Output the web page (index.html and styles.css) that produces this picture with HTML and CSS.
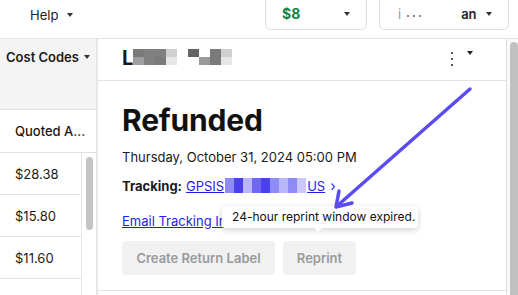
FILE: index.html
```html
<!DOCTYPE html>
<html>
<head>
<meta charset="utf-8">
<link rel="stylesheet" href="styles.css">
</head>
<body>
<div class="page">
  <header class="topbar">
    <div class="help">Help <span class="caret"></span></div>
    <div class="spacer"></div>
    <div class="pill pill-bal">
      <span class="bal">$8</span>
      <span class="caret"></span>
    </div>
    <div class="pill pill-user">
      <span class="uname"><span class="faint">i</span><span class="dots"><i></i><i></i><i></i></span><span class="an">an</span></span>
      <span class="caret"></span>
    </div>
  </header>

  <div class="main">
    <aside class="sidebar">
      <div class="sb-head"><span class="sb-title">Cost Codes</span> <span class="caret"></span></div>
      <div class="col-head">Quoted A...</div>
      <div class="sb-body">
        <div class="rows">
          <div class="row">$28.38</div>
          <div class="row">$15.80</div>
          <div class="row">$11.60</div>
          <div class="row"></div>
        </div>
        <div class="track"><div class="thumb"></div></div>
      </div>
    </aside>

    <section class="detail">
      <div class="d-head">
        <div class="name">L<span class="px">
          <span class="pxcol"><b class="g1"></b><b class="g0"></b></span>
          <span class="pxcol"><b class="g2"></b><b class="g2"></b></span>
          <span class="pxcol"><b class="g2"></b><b class="g1"></b></span>
          <span class="pxcol"><b class="g4"></b><b class="g5"></b></span>
          <span class="pxgap"></span>
          <span class="pxcol"><b class="g6"></b><b class="g3"></b></span>
          <span class="pxcol"><b class="g3"></b><b class="g7"></b></span>
          <span class="pxcol"><b class="g1"></b><b class="g1"></b></span>
          <span class="pxcol"><b class="g4"></b><b class="g5"></b></span>
        </span></div>
        <div class="d-actions">
          <span class="kebab"><i></i><i></i><i></i></span>
          <span class="caret"></span>
        </div>
      </div>
      <div class="d-body">
        <h1 class="status">Refunded</h1>
        <div class="date">Thursday, October 31, 2024 05:00 PM</div>
        <div class="tracking"><span class="lbl">Tracking:</span> <a class="link" href="#">GPSIS<span class="bpx"><i class="b1"></i><i class="b2"></i><i class="b3"></i><i class="b4"></i><i class="b2"></i><i class="b1"></i><i class="b3"></i><i class="b1"></i><i class="b5"></i></span>US</a> <span class="chev">›</span></div>
        <div class="email"><a class="link" href="#">Email Tracking Info</a>
          <div class="tooltip">24-hour reprint window expired.</div>
        </div>
        <div class="buttons">
          <button class="btn btn-return">Create Return Label</button>
          <button class="btn btn-reprint">Reprint</button>
        </div>
      </div>
    </section>

    <div class="pagescroll"><div class="pthumb"></div></div>
  </div>

  <svg class="arrow" width="518" height="295" viewBox="0 0 518 295">
    <g stroke="#5b4cf2" stroke-width="3.5" stroke-linecap="round" stroke-linejoin="round" fill="none">
      <line x1="470" y1="89" x2="337" y2="206"/>
      <polyline points="339,191 336,207 352,203"/>
    </g>
  </svg>
</div>
</body>
</html>
```

FILE: styles.css
```css
* { box-sizing: border-box; }
html, body { margin: 0; padding: 0; }
body {
  width: 518px;
  height: 295px;
  overflow: hidden;
  background: #fff;
  font-family: "Inter", "Liberation Sans", sans-serif;
  color: #1a1a1a;
}
.page { position: relative; width: 518px; height: 295px; overflow: hidden; }

.caret {
  display: inline-block;
  width: 0; height: 0;
  border-left: 3.5px solid transparent;
  border-right: 3.5px solid transparent;
  border-top: 4px solid #333;
  vertical-align: middle;
}

/* top bar */
.topbar {
  height: 39px;
  display: flex;
  align-items: flex-end;
  padding: 0 9px 8px 30px;
  border-bottom: 1px solid #e4e4e4;
  flex-shrink: 0;
}
.help {
  font-size: 13px;
  color: #222;
  align-self: flex-start;
  margin-top: 7px;
  display: flex;
  align-items: center;
  gap: 9px;
}
.spacer { flex: 1; }
.pill {
  height: 40px;
  border: 1px solid #dedede;
  border-radius: 6px;
  display: flex;
  align-items: flex-end;
  justify-content: space-between;
  padding: 0 16px 7px 16px;
}
.pill-bal { width: 102px; margin-right: 12px; }
.pill-user { width: 130px; padding-left: 18px; }
.bal { color: #12834a; font-weight: 700; font-size: 14px; line-height: 16px; }
.pill .caret { margin-bottom: 6px; }
.uname { display: flex; align-items: center; font-size: 13px; font-weight: 600; line-height: 16px; }
.faint { color: #999; font-weight: 400; }
.dots { display: flex; gap: 4px; margin: 4px 40px 0 6px; }
.dots i { width: 2px; height: 2px; background: #888; display: block; }
.an { color: #222; }

/* main */
.main { display: flex; height: 256px; overflow: hidden; }

.sidebar {
  width: 98px;
  flex-shrink: 0;
  border-right: 2px solid #e6e6e6;
  display: flex;
  flex-direction: column;
  overflow: hidden;
}
.sb-head {
  height: 71px;
  flex-shrink: 0;
  background: #f4f4f4;
  border-bottom: 1px solid #e2e2e2;
  padding: 10px 0 0 6px;
  font-size: 13px;
  font-weight: 600;
  display: flex;
  align-items: flex-start;
  gap: 5px;
}
.sb-head .caret { margin-top: 6px; }
.col-head {
  height: 43px;
  flex-shrink: 0;
  border-bottom: 1px solid #e2e2e2;
  padding-left: 15px;
  display: flex;
  align-items: center;
  font-size: 13px;
  font-weight: 500;
}
.sb-body { display: flex; flex-shrink: 0; }
.rows { width: 82px; border-right: 1px solid #e6e6e6; }
.row {
  height: 42px;
  border-bottom: 1px solid #e2e2e2;
  padding-left: 15px;
  display: flex;
  align-items: center;
  font-size: 13px;
}
.track { flex: 1; padding: 4px 0 0 4px; }
.thumb { width: 7px; height: 73px; background: #c4c4c4; border-radius: 4px; }

.detail {
  flex: 1;
  border-right: 1px solid #dcdcdc;
  display: flex;
  flex-direction: column;
}
.d-head {
  height: 42px;
  flex-shrink: 0;
  border-bottom: 1px solid #e3e3e3;
  display: flex;
  align-items: center;
  justify-content: space-between;
  padding: 0 33px 4px 24px;
}
.name {
  font-size: 20px;
  font-weight: 700;
  line-height: 20px;
  display: flex;
  align-items: flex-start;
}
.px { display: flex; margin-top: 1px; }
.pxcol { display: flex; flex-direction: column; }
.pxcol b { display: block; width: 11px; height: 8px; }
.pxgap { width: 11px; }
.g0 { background: #9e9e9e; }
.g1 { background: #7a7a7a; }
.g2 { background: #808080; }
.g3 { background: #ffffff; }
.g4 { background: #cfcfcf; }
.g5 { background: #e6e6e6; }
.g6 { background: #646464; }
.g7 { background: #9a9a9a; }

.d-actions { display: flex; align-items: flex-start; gap: 14px; margin-top: 2px; }
.kebab { display: flex; flex-direction: column; gap: 3.5px; padding-top: 1px; }
.kebab i { display: block; width: 2.5px; height: 2.5px; background: #222; border-radius: 50%; }
.d-actions .caret { border-top-color: #222; margin-top: 0; }

.d-body { padding: 0 24px; flex: 1; border-bottom: 1px solid #e3e3e3; margin-bottom: 4px; }
.status {
  margin: 23px 0 0;
  font-size: 30px;
  font-weight: 700;
  line-height: 32px;
  letter-spacing: -0.2px;
  color: #111;
}
.date { margin-top: 13px; font-size: 13px; line-height: 16px; }
.tracking { margin-top: 13px; font-size: 13px; line-height: 16px; display: flex; align-items: center; }
.lbl { font-weight: 700; margin-right: 4px; }
.link { color: #1e1ee8; text-decoration: underline; }
.bpx { display: inline-flex; vertical-align: -2px; height: 15px; margin: 0 1px 0 1px; }
.bpx i { display: block; width: 9px; height: 15px; }
.b1 { background: #8f8bf6; }
.b2 { background: #4a40f0; }
.b3 { background: #b9b6fa; }
.b4 { background: #6e67f4; }
.b5 { background: #cac8fb; }
.chev { color: #1e1ee8; margin-left: 5px; font-size: 14px; }

.email { position: relative; margin-top: 19px; font-size: 13px; line-height: 16px; }
.tooltip {
  position: absolute;
  left: 100px;
  top: -7px;
  width: 196px;
  height: 22px;
  background: #fff;
  border-radius: 3px;
  box-shadow: 0 2px 6px rgba(0,0,0,0.18);
  font-size: 12px;
  line-height: 22px;
  padding-left: 10px;
  color: #111;
}
.tooltip::after {
  content: "";
  position: absolute;
  left: 92px;
  bottom: -4px;
  border-left: 4px solid transparent;
  border-right: 4px solid transparent;
  border-top: 4px solid #fff;
}

.buttons { display: flex; gap: 8px; margin-top: 12px; }
.btn {
  height: 34px;
  border: none;
  border-radius: 4px;
  background: #f1f1f2;
  color: #9a9a9a;
  font-family: inherit;
  font-size: 13px;
  font-weight: 600;
  padding: 0;
  white-space: nowrap;
}
.btn-return { width: 153px; }
.btn-reprint { width: 73px; }

.pagescroll { width: 11px; flex-shrink: 0; background: #fafafa; padding: 3px 1px 0 3px; }
.pthumb { width: 8px; height: 300px; background: #c1c1c1; border-radius: 4px; }

.arrow { position: absolute; left: 0; top: 0; pointer-events: none; }
```
